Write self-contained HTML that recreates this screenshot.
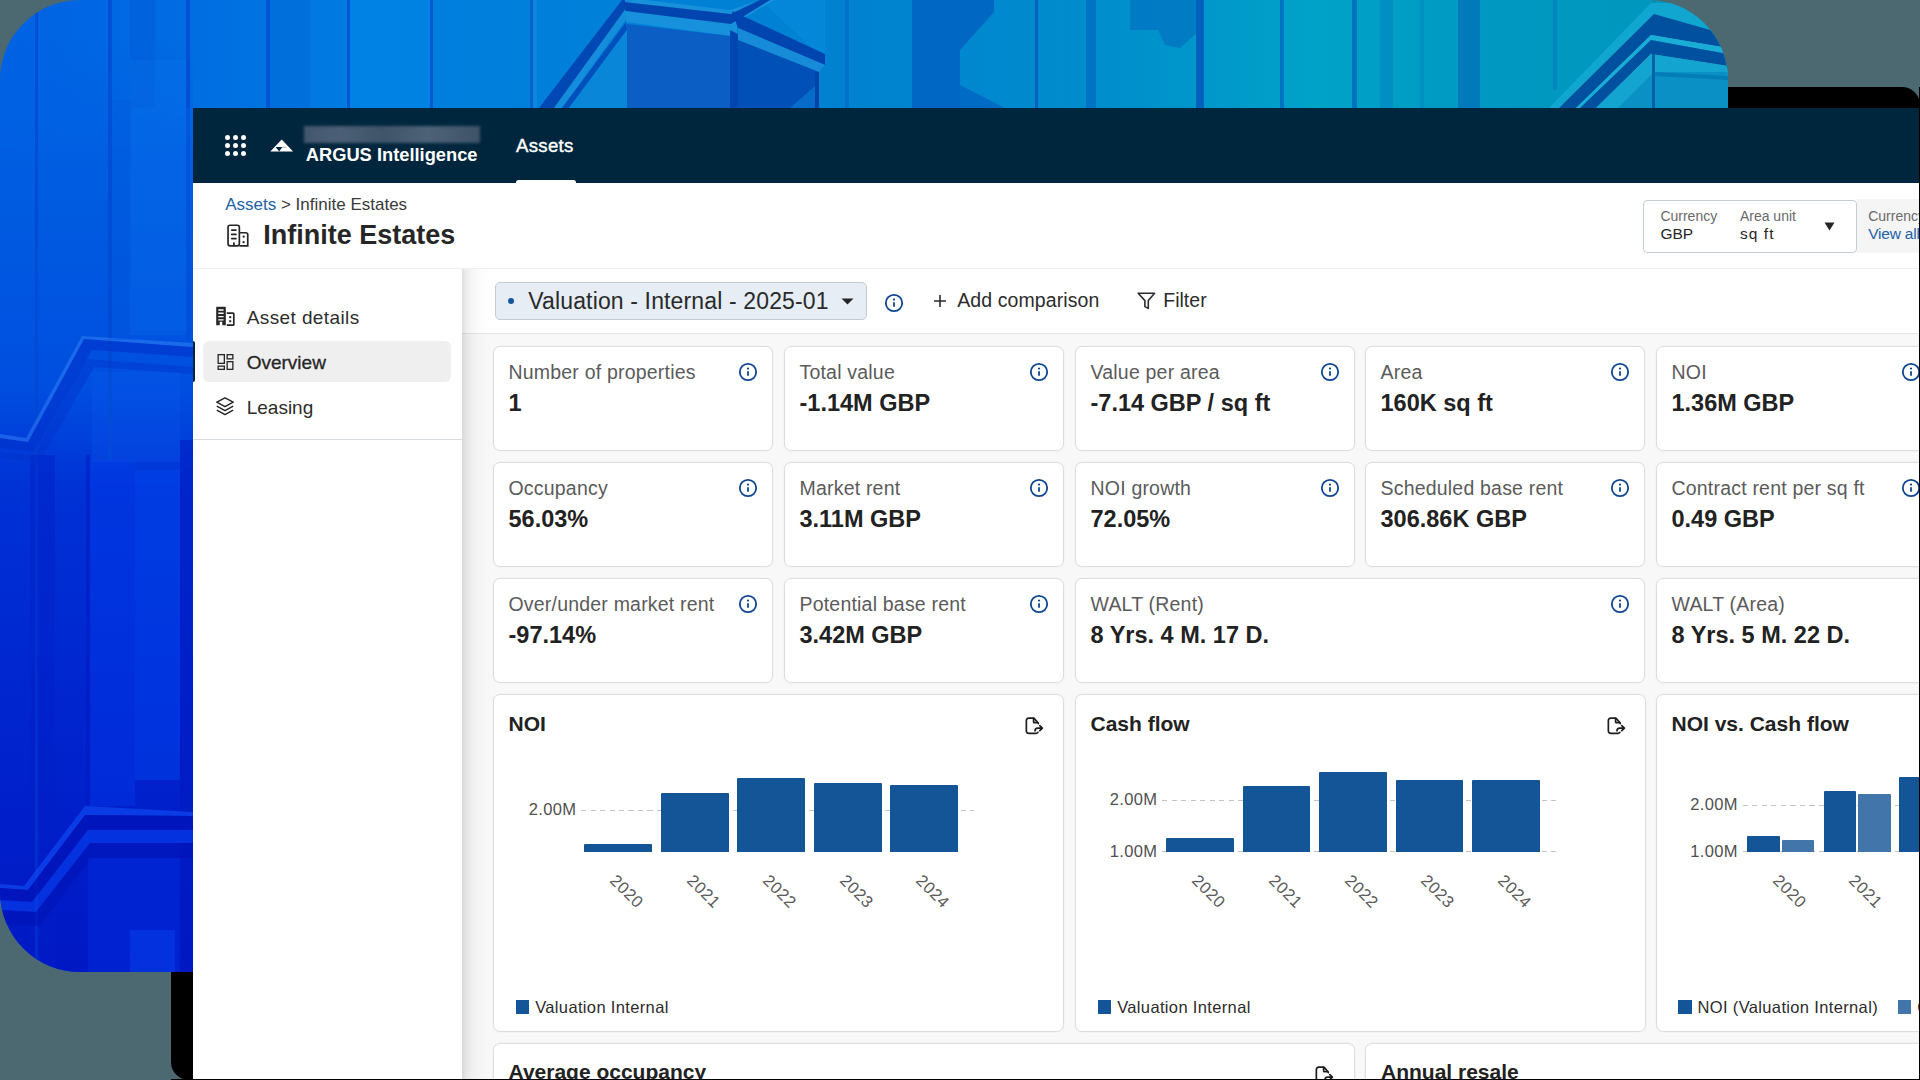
<!DOCTYPE html>
<html><head><meta charset="utf-8">
<style>
*{box-sizing:border-box;margin:0;padding:0}
html,body{width:1920px;height:1080px;overflow:hidden}
body{position:relative;background:#4c6870;font-family:"Liberation Sans",sans-serif;color:#262626}
#frame{position:absolute;left:171px;top:87px;width:1749px;height:993px;background:#000;border-radius:18px}
#photo{position:absolute;left:0;top:0;width:1728px;height:972px;border-radius:80px;overflow:hidden}
#app{position:absolute;left:0;top:0;width:1919px;height:1079px;overflow:hidden;clip-path:inset(108px 0 0 193px)}
.r{position:absolute}
.t{position:absolute;white-space:nowrap;line-height:1}
.ic{position:absolute;overflow:visible}
.card{position:absolute;background:#fff;border:1px solid #dedede;border-radius:7px;box-shadow:0 0 0 0.5px rgba(0,0,0,0.03)}
</style></head>
<body>
<div id="frame"></div>
<div id="photo">
<svg width="1728" height="972" viewBox="0 0 1728 972">
<defs>
<linearGradient id="pg" x1="0" y1="0" x2="1728" y2="0" gradientUnits="userSpaceOnUse">
<stop offset="0" stop-color="#0062e4"/>
<stop offset="0.09" stop-color="#006ae2"/>
<stop offset="0.22" stop-color="#007ee0"/>
<stop offset="0.5" stop-color="#0082d0"/>
<stop offset="0.64" stop-color="#008ecc"/>
<stop offset="0.76" stop-color="#00a2c8"/>
<stop offset="0.87" stop-color="#0098c0"/>
<stop offset="1" stop-color="#0096bc"/>
</linearGradient>
<linearGradient id="lg" x1="0" y1="0" x2="0" y2="972" gradientUnits="userSpaceOnUse">
<stop offset="0" stop-color="#0064e4"/>
<stop offset="0.2" stop-color="#005ce0"/>
<stop offset="0.4" stop-color="#004ee0"/>
<stop offset="0.5" stop-color="#0032d6"/>
<stop offset="0.7" stop-color="#0026d0"/>
<stop offset="1" stop-color="#0018c4"/>
</linearGradient>
<linearGradient id="tf" x1="0" y1="40" x2="0" y2="160" gradientUnits="userSpaceOnUse">
<stop offset="0" stop-color="#fff" stop-opacity="0"/>
<stop offset="1" stop-color="#fff" stop-opacity="1"/>
</linearGradient>
<mask id="lm" maskUnits="userSpaceOnUse" x="0" y="0" width="260" height="972"><rect x="0" y="0" width="260" height="972" fill="url(#tf)"/></mask>
</defs>
<rect width="1728" height="972" fill="url(#pg)"/>
<rect x="0" y="40" width="193" height="932" fill="url(#lg)" mask="url(#lm)"/>
<!-- left-top stripes -->
<g fill="#0048d0" opacity="0.7">
<rect x="35" y="0" width="3" height="972"/>
<rect x="108" y="0" width="4" height="460"/>
<rect x="186" y="0" width="4" height="108"/>
<rect x="266" y="0" width="4" height="108"/>
<rect x="347" y="0" width="3" height="108"/>
<rect x="430" y="0" width="3" height="108"/>
</g>
<rect x="130" y="0" width="25" height="108" fill="#0058d8" opacity="0.4"/>
<rect x="270" y="0" width="40" height="108" fill="#0060d0" opacity="0.35"/>
<rect x="350" y="0" width="80" height="108" fill="#0088e8" opacity="0.45"/>
<!-- balcony box -->
<path d="M760 0 L825 0 L825 60 Z" fill="#0a8ee0" opacity="0.5"/>
<path d="M539 108 L622 0 L632 0 L554 108 Z" fill="#0048b4"/>
<path d="M554 108 L632 0 L640 0 L562 108 Z" fill="#1a90dc" opacity="0.8"/>
<path d="M562 108 L626 22 L627 30 L569 108 Z" fill="#0050bc"/>
<path d="M569 108 L627 30 L627 108 Z" fill="#0a86d8"/>
<path d="M625 0 L645 0 L730 10 L760 0 L775 0 L737 22 L737 36 L730 36 L626 22 Z" fill="#1a92dc" opacity="0.9"/>
<path d="M624 2 L730.6 14 L760 0 L770 0 L731 24 L625.6 11 Z" fill="#0044b0"/>
<path d="M627 24 L730 36 L730 108 L627 108 Z" fill="#0a5ec4"/>
<path d="M730 30 L738 34 L738 108 L730 108 Z" fill="#0046b0"/>
<path d="M732 11 L825 54 L825 65 L738 28 Z" fill="#0044b0"/>
<path d="M738 28 L825 65 L819 72 L738 40 Z" fill="#1a8cd8" opacity="0.9"/>
<path d="M738 40 L819 72 L819 108 L738 108 Z" fill="#0050b8"/>
<rect x="815" y="72" width="4" height="36" fill="#0044a8"/>
<path d="M790 108 L815 86 L815 108 Z" fill="#0a78d0" opacity="0.7"/>
<rect x="530" y="0" width="3" height="108" fill="#0050c8" opacity="0.6"/><rect x="533" y="0" width="4" height="108" fill="#1a90e0" opacity="0.5"/>
<rect x="845" y="0" width="4" height="108" fill="#0060c0" opacity="0.5"/>
<!-- middle shapes -->
<path d="M912 0 L994 0 L994 12 L960 50 L960 108 L912 108 Z" fill="#0060c0" opacity="0.8"/>
<path d="M960 85 L1005 108 L960 108 Z" fill="#0060c0" opacity="0.7"/>
<rect x="1035" y="0" width="3" height="108" fill="#0062c0"/>
<rect x="1086" y="0" width="10" height="108" fill="#0068c0" opacity="0.7"/>
<path d="M1130 0 L1200 0 L1200 30 L1180 48 L1165 45 L1158 30 L1130 30 Z" fill="#0070c0" opacity="0.7"/>
<rect x="1196" y="0" width="8" height="108" fill="#0060bc"/>
<rect x="1280" y="0" width="4" height="108" fill="#0068c0" opacity="0.8"/>
<rect x="1352" y="0" width="5" height="108" fill="#0068bc" opacity="0.8"/>
<rect x="1380" y="0" width="13" height="108" fill="#0080c0" opacity="0.5"/>
<rect x="1420" y="0" width="4" height="108" fill="#0086c0" opacity="0.5"/>
<rect x="1458" y="0" width="22" height="108" fill="#006cb8" opacity="0.7"/>
<rect x="1553" y="0" width="4" height="90" fill="#007cc0" opacity="0.6"/>
<!-- right beams -->
<path d="M1549 108 L1651 3 L1728 3 L1728 108 Z" fill="#10a6d0"/>
<path d="M1559 108 L1654 14 L1728 35 L1728 48 L1651 35 L1576 108 Z" fill="#0050a0"/>
<path d="M1576 108 L1651 35 L1728 48 L1728 54 L1651 40 L1580 108 Z" fill="#1aaed6"/>
<path d="M1580 108 L1651 40 L1728 54 L1728 66 L1651 54 L1596 108 Z" fill="#0050a0"/>
<path d="M1596 108 L1651 54 L1728 66 L1728 72 L1654 72 L1618 108 Z" fill="#14a4d0"/>
<path d="M1618 108 L1654 72 L1728 72 L1728 108 Z" fill="#0a90c4"/>
<rect x="1652" y="54" width="3" height="54" fill="#0060a8"/>
<path d="M1654 72 L1728 76 L1728 80 L1654 76 Z" fill="#0070b0" opacity="0.6"/>
<!-- left strip structure -->
<rect x="30" y="455" width="25" height="517" fill="#0020c8" opacity="0.45"/>
<rect x="90" y="460" width="45" height="346" fill="#0040f0" opacity="0.35"/>
<rect x="135" y="470" width="45" height="310" fill="#0050f8" opacity="0.35"/>
<rect x="180" y="440" width="13" height="532" fill="#0018c0" opacity="0.5"/>
<rect x="86" y="455" width="4" height="350" fill="#0018c0" opacity="0.5"/>
<g>
<path d="M84 339 L193 347 L193 357 L92 350 L34 452 L0 448 L0 438 L28 442 Z" fill="#0030c8" opacity="0.55"/>
<path d="M86 359 L193 367 L193 374 L94 367 L40 462 L0 458 L0 452 L34 455 Z" fill="#0030c8" opacity="0.4"/>
<path d="M85 806 L193 812 L193 816 L85 815 L28 890 L0 888 L0 884 L24 886 Z" fill="#1050f8" opacity="0.6"/>
<path d="M85 815 L193 816 L193 830 L88 830 L32 902 L0 900 L0 888 L28 890 Z" fill="#0014b8" opacity="0.75"/>
<path d="M88 830 L193 830 L193 843 L90 843 L36 912 L0 910 L0 900 L32 902 Z" fill="#0a44f0" opacity="0.55"/>
<path d="M90 843 L193 843 L193 858 L92 858 L40 926 L0 924 L0 910 L36 912 Z" fill="#0014b8" opacity="0.6"/>
</g>
<rect x="88" y="858" width="92" height="114" fill="#0030e0" opacity="0.4"/>
<rect x="130" y="930" width="45" height="42" fill="#0848f0" opacity="0.4"/>
<rect x="130" y="60" width="58" height="275" fill="#0a78f0" opacity="0.25"/>
<rect x="186" y="60" width="4" height="280" fill="#0048d0" opacity="0.5"/>
<path d="M82 336 L193 343 L193 347 L84 339 L28 442 L0 438 L0 434 L26 438 Z" fill="#3a8af8" opacity="0.45"/>
<rect x="92" y="372" width="88" height="90" fill="#0a5af0" opacity="0.25"/>
<rect x="113" y="100" width="18" height="240" fill="#0058dc" opacity="0.3"/>
</svg>
</div>
<div id="app">
<div class="r" style="left:193px;top:108px;width:1726px;height:75px;background:#00263d"></div>
<div class="r" style="left:193px;top:183px;width:1726px;height:896px;background:#fff"></div>
<div class="r" style="left:224.8px;top:135.4px;width:5px;height:5px;border-radius:50%;background:#fff"></div>
<div class="r" style="left:232.9px;top:135.4px;width:5px;height:5px;border-radius:50%;background:#fff"></div>
<div class="r" style="left:241.0px;top:135.4px;width:5px;height:5px;border-radius:50%;background:#fff"></div>
<div class="r" style="left:224.8px;top:143.3px;width:5px;height:5px;border-radius:50%;background:#fff"></div>
<div class="r" style="left:232.9px;top:143.3px;width:5px;height:5px;border-radius:50%;background:#fff"></div>
<div class="r" style="left:241.0px;top:143.3px;width:5px;height:5px;border-radius:50%;background:#fff"></div>
<div class="r" style="left:224.8px;top:151.2px;width:5px;height:5px;border-radius:50%;background:#fff"></div>
<div class="r" style="left:232.9px;top:151.2px;width:5px;height:5px;border-radius:50%;background:#fff"></div>
<div class="r" style="left:241.0px;top:151.2px;width:5px;height:5px;border-radius:50%;background:#fff"></div>
<svg class="ic" width="24" height="14" viewBox="0 0 24 14" style="left:269.5px;top:139px"><path d="M11.7 0.5L0.3 12.6H23.1Z" fill="#fff"/><path d="M5.6 8.1H12.3L9.2 12.6Z" fill="#00263d"/><path d="M12.2 8.3H16.5" stroke="#00263d" stroke-width="0.7" opacity="0.5"/></svg>
<div class="r" style="left:304px;top:126px;width:176px;height:17px;background:linear-gradient(90deg,#4a5d74,#53667c 20%,#47596e 45%,#56697e 70%,#45586d);filter:blur(1.5px);opacity:.9"></div>
<div class="t" style="left:305.8px;top:146.41px;font-size:18.3px;color:#fff;font-weight:bold;">ARGUS Intelligence</div>
<div class="t" style="left:516.0px;top:136.86px;font-size:18.6px;color:#fff;-webkit-text-stroke:0.4px #fff;letter-spacing:0.3px;">Assets</div>
<div class="r" style="left:516px;top:179.6px;width:59.5px;height:3.4px;background:#fff;border-radius:2.5px 2.5px 0 0"></div>
<div class="t" style="left:225.2px;top:195.81px;font-size:17px;color:#3a3a3a;"><span style="color:#2262a8">Assets</span> &gt; Infinite Estates</div>
<svg class="ic" width="24" height="24" viewBox="0 0 24 24" style="left:226px;top:224px"><g fill="none" stroke="#262626" stroke-width="1.7"><rect x="2.05" y="1.25" width="11.3" height="20.6" rx="2"/><path d="M13.35 8.75H19.75a2 2 0 0 1 2 2V21.85H13.35"/></g><g stroke="#262626" stroke-width="1.8" stroke-linecap="round"><path d="M5.8 6.1H9.9M5.8 10.4H9.9M5.8 14.6H9.9M7.9 19.2V21.5"/></g><circle cx="17.6" cy="12.7" r="1.15" fill="#262626"/><circle cx="17.6" cy="18.2" r="1.15" fill="#262626"/></svg>
<div class="t" style="left:263.2px;top:222.34px;font-size:27px;color:#262626;font-weight:bold;">Infinite Estates</div>
<div class="r" style="left:1643px;top:199.5px;width:214px;height:53px;border:1px solid #c6cdd2;border-radius:4px;background:#fff"></div>
<div class="r" style="left:1857px;top:199px;width:62px;height:54px;background:#f5f5f5"></div>
<div class="t" style="left:1660.4px;top:209.15px;font-size:14px;color:#6a6a6a;">Currency</div>
<div class="t" style="left:1660.4px;top:225.58px;font-size:15.5px;color:#262626;">GBP</div>
<div class="t" style="left:1739.9px;top:209.15px;font-size:14px;color:#6a6a6a;">Area unit</div>
<div class="t" style="left:1739.9px;top:225.58px;font-size:15.5px;color:#262626;letter-spacing:1.1px;">sq ft</div>
<svg class="ic" width="11" height="9" viewBox="0 0 11 9" style="left:1824px;top:221.5px"><path d="M0.5 0.5h10L5.5 8.5z" fill="#262626"/></svg>
<div class="t" style="left:1868.2px;top:209.45px;font-size:14px;color:#6a6a6a;">Currency</div>
<div class="t" style="left:1868.2px;top:225.58px;font-size:15.5px;color:#2262a8;letter-spacing:-0.2px;">View all</div>
<div class="r" style="left:193px;top:268px;width:1726px;height:1px;background:#eef0f1"></div>
<div class="r" style="left:203px;top:341.3px;width:248px;height:40.7px;border-radius:6px;background:#efefef"></div>
<div class="r" style="left:193px;top:341px;width:2px;height:41px;border-radius:0 2px 2px 0;background:#00263d"></div>
<div class="r" style="left:193px;top:439px;width:269px;height:1px;background:#d8dde1"></div>
<svg class="ic" width="20" height="20" viewBox="0 0 20 20" style="left:214.5px;top:306px"><path d="M1.2 19.2V1.8c0-.6.4-1 1-1h7.6c.6 0 1 .4 1 1v17.4h-3.5v-3.5H4.7v3.5z" fill="#262626"/><path d="M3.3 4h5.3M3.3 7.3h5.3M3.3 10.6h5.3M3.3 13.9h5.3" stroke="#fff" stroke-width="1.4"/><path d="M11.8 7.2h6.2c.5 0 .8.3.8.8v10.4c0 .5-.3.8-.8.8h-6.2" fill="none" stroke="#262626" stroke-width="1.7"/><rect x="14.2" y="10.2" width="2" height="2" fill="#262626"/><rect x="14.2" y="14.2" width="2" height="2" fill="#262626"/></svg>
<svg class="ic" width="20" height="20" viewBox="0 0 20 20" style="left:214.5px;top:352px"><g fill="none" stroke="#262626" stroke-width="1.3"><rect x="3.15" y="2.65" width="6.2" height="8.7"/><rect x="3.15" y="14.15" width="6.2" height="3.2"/><rect x="12.15" y="2.65" width="5.7" height="4.2"/><rect x="12.15" y="9.65" width="5.7" height="7.7"/></g></svg>
<svg class="ic" width="20" height="20" viewBox="0 0 20 20" style="left:214.5px;top:396px"><g fill="none" stroke="#262626" stroke-width="1.5" stroke-linejoin="round"><path d="M10 1.8L18.2 6.2 10 10.6 1.8 6.2z"/><path d="M1.8 10.2L10 14.6l8.2-4.4"/><path d="M1.8 14.2L10 18.6l8.2-4.4"/></g></svg>
<div class="t" style="left:246.7px;top:308.12px;font-size:19px;color:#2c2c2c;letter-spacing:0.4px;">Asset details</div>
<div class="t" style="left:246.7px;top:352.82px;font-size:19px;color:#262626;-webkit-text-stroke:0.3px #262626;">Overview</div>
<div class="t" style="left:246.7px;top:397.62px;font-size:19px;color:#2c2c2c;">Leasing</div>
<div class="r" style="left:462px;top:269px;width:1457px;height:810px;background:#f8f8f8"></div>
<div class="r" style="left:462px;top:269px;width:1457px;height:65px;background:#fff;border-bottom:1px solid #e2e6e9"></div>
<div class="r" style="left:462px;top:269px;width:30px;height:810px;background:linear-gradient(90deg,rgba(0,0,0,.13) 0px,rgba(0,0,0,.075) 4px,rgba(0,0,0,.035) 10px,rgba(0,0,0,.012) 18px,rgba(0,0,0,0) 30px)"></div>
<div class="r" style="left:494.5px;top:281.5px;width:372px;height:38px;border:1px solid #c3ccd5;border-radius:5px;background:#e6edf4"></div>
<div class="r" style="left:508px;top:297.8px;width:6px;height:6px;border-radius:50%;background:#1555a0"></div>
<div class="t" style="left:528.3px;top:289.73px;font-size:23px;color:#2a2a2a;letter-spacing:0.14px;">Valuation - Internal - 2025-01</div>
<svg class="ic" width="13" height="7" viewBox="0 0 13 7" style="left:840.5px;top:297.5px"><path d="M0.5 0.5h12L6.5 6.5z" fill="#262626"/></svg>
<svg class="ic" width="20" height="20" viewBox="0 0 20 20" style="left:884.0px;top:293.0px"><circle cx="10" cy="10" r="8.2" fill="none" stroke="#0d4592" stroke-width="1.8"/><circle cx="10" cy="6.6" r="1.1" fill="#0d4592"/><rect x="9.1" y="9" width="1.8" height="5" rx="0.9" fill="#0d4592"/></svg>
<svg class="ic" width="14" height="14" viewBox="0 0 14 14" style="left:933px;top:294px"><path d="M7 1v12M1 7h12" stroke="#2c2c2c" stroke-width="1.6"/></svg>
<div class="t" style="left:957.2px;top:291.49px;font-size:19.5px;color:#2c2c2c;letter-spacing:0.1px;">Add comparison</div>
<svg class="ic" width="19" height="18" viewBox="0 0 19 18" style="left:1137px;top:291.5px"><path d="M1.2 1.2h16.4l-6.3 7.4v7.8l-3.4-1.8V8.6z" fill="none" stroke="#2c2c2c" stroke-width="1.6" stroke-linejoin="round"/></svg>
<div class="t" style="left:1163.3px;top:291.49px;font-size:19.5px;color:#2c2c2c;">Filter</div>
<div class="card" style="left:493px;top:346px;width:280px;height:105px"></div>
<div class="t" style="left:508.5px;top:362.59px;font-size:19.5px;color:#5b5b5b;letter-spacing:0.2px;">Number of properties</div>
<div class="t" style="left:508.5px;top:392.01px;font-size:23.5px;color:#222;font-weight:bold;">1</div>
<svg class="ic" width="20" height="20" viewBox="0 0 20 20" style="left:738.0px;top:361.8px"><circle cx="10" cy="10" r="8.2" fill="none" stroke="#0d4592" stroke-width="1.8"/><circle cx="10" cy="6.6" r="1.1" fill="#0d4592"/><rect x="9.1" y="9" width="1.8" height="5" rx="0.9" fill="#0d4592"/></svg>
<div class="card" style="left:784px;top:346px;width:280px;height:105px"></div>
<div class="t" style="left:799.5px;top:362.59px;font-size:19.5px;color:#5b5b5b;letter-spacing:0.2px;">Total value</div>
<div class="t" style="left:799.5px;top:392.01px;font-size:23.5px;color:#222;font-weight:bold;">-1.14M GBP</div>
<svg class="ic" width="20" height="20" viewBox="0 0 20 20" style="left:1029.0px;top:361.8px"><circle cx="10" cy="10" r="8.2" fill="none" stroke="#0d4592" stroke-width="1.8"/><circle cx="10" cy="6.6" r="1.1" fill="#0d4592"/><rect x="9.1" y="9" width="1.8" height="5" rx="0.9" fill="#0d4592"/></svg>
<div class="card" style="left:1075px;top:346px;width:280px;height:105px"></div>
<div class="t" style="left:1090.5px;top:362.59px;font-size:19.5px;color:#5b5b5b;letter-spacing:0.2px;">Value per area</div>
<div class="t" style="left:1090.5px;top:392.01px;font-size:23.5px;color:#222;font-weight:bold;">-7.14 GBP / sq ft</div>
<svg class="ic" width="20" height="20" viewBox="0 0 20 20" style="left:1320.0px;top:361.8px"><circle cx="10" cy="10" r="8.2" fill="none" stroke="#0d4592" stroke-width="1.8"/><circle cx="10" cy="6.6" r="1.1" fill="#0d4592"/><rect x="9.1" y="9" width="1.8" height="5" rx="0.9" fill="#0d4592"/></svg>
<div class="card" style="left:1365px;top:346px;width:280px;height:105px"></div>
<div class="t" style="left:1380.5px;top:362.59px;font-size:19.5px;color:#5b5b5b;letter-spacing:0.2px;">Area</div>
<div class="t" style="left:1380.5px;top:392.01px;font-size:23.5px;color:#222;font-weight:bold;">160K sq ft</div>
<svg class="ic" width="20" height="20" viewBox="0 0 20 20" style="left:1610.0px;top:361.8px"><circle cx="10" cy="10" r="8.2" fill="none" stroke="#0d4592" stroke-width="1.8"/><circle cx="10" cy="6.6" r="1.1" fill="#0d4592"/><rect x="9.1" y="9" width="1.8" height="5" rx="0.9" fill="#0d4592"/></svg>
<div class="card" style="left:1656px;top:346px;width:280px;height:105px"></div>
<div class="t" style="left:1671.5px;top:362.59px;font-size:19.5px;color:#5b5b5b;letter-spacing:0.2px;">NOI</div>
<div class="t" style="left:1671.5px;top:392.01px;font-size:23.5px;color:#222;font-weight:bold;">1.36M GBP</div>
<svg class="ic" width="20" height="20" viewBox="0 0 20 20" style="left:1901.0px;top:361.8px"><circle cx="10" cy="10" r="8.2" fill="none" stroke="#0d4592" stroke-width="1.8"/><circle cx="10" cy="6.6" r="1.1" fill="#0d4592"/><rect x="9.1" y="9" width="1.8" height="5" rx="0.9" fill="#0d4592"/></svg>
<div class="card" style="left:493px;top:462px;width:280px;height:105px"></div>
<div class="t" style="left:508.5px;top:478.59px;font-size:19.5px;color:#5b5b5b;letter-spacing:0.2px;">Occupancy</div>
<div class="t" style="left:508.5px;top:508.01px;font-size:23.5px;color:#222;font-weight:bold;">56.03%</div>
<svg class="ic" width="20" height="20" viewBox="0 0 20 20" style="left:738.0px;top:477.8px"><circle cx="10" cy="10" r="8.2" fill="none" stroke="#0d4592" stroke-width="1.8"/><circle cx="10" cy="6.6" r="1.1" fill="#0d4592"/><rect x="9.1" y="9" width="1.8" height="5" rx="0.9" fill="#0d4592"/></svg>
<div class="card" style="left:784px;top:462px;width:280px;height:105px"></div>
<div class="t" style="left:799.5px;top:478.59px;font-size:19.5px;color:#5b5b5b;letter-spacing:0.2px;">Market rent</div>
<div class="t" style="left:799.5px;top:508.01px;font-size:23.5px;color:#222;font-weight:bold;">3.11M GBP</div>
<svg class="ic" width="20" height="20" viewBox="0 0 20 20" style="left:1029.0px;top:477.8px"><circle cx="10" cy="10" r="8.2" fill="none" stroke="#0d4592" stroke-width="1.8"/><circle cx="10" cy="6.6" r="1.1" fill="#0d4592"/><rect x="9.1" y="9" width="1.8" height="5" rx="0.9" fill="#0d4592"/></svg>
<div class="card" style="left:1075px;top:462px;width:280px;height:105px"></div>
<div class="t" style="left:1090.5px;top:478.59px;font-size:19.5px;color:#5b5b5b;letter-spacing:0.2px;">NOI growth</div>
<div class="t" style="left:1090.5px;top:508.01px;font-size:23.5px;color:#222;font-weight:bold;">72.05%</div>
<svg class="ic" width="20" height="20" viewBox="0 0 20 20" style="left:1320.0px;top:477.8px"><circle cx="10" cy="10" r="8.2" fill="none" stroke="#0d4592" stroke-width="1.8"/><circle cx="10" cy="6.6" r="1.1" fill="#0d4592"/><rect x="9.1" y="9" width="1.8" height="5" rx="0.9" fill="#0d4592"/></svg>
<div class="card" style="left:1365px;top:462px;width:280px;height:105px"></div>
<div class="t" style="left:1380.5px;top:478.59px;font-size:19.5px;color:#5b5b5b;letter-spacing:0.2px;">Scheduled base rent</div>
<div class="t" style="left:1380.5px;top:508.01px;font-size:23.5px;color:#222;font-weight:bold;">306.86K GBP</div>
<svg class="ic" width="20" height="20" viewBox="0 0 20 20" style="left:1610.0px;top:477.8px"><circle cx="10" cy="10" r="8.2" fill="none" stroke="#0d4592" stroke-width="1.8"/><circle cx="10" cy="6.6" r="1.1" fill="#0d4592"/><rect x="9.1" y="9" width="1.8" height="5" rx="0.9" fill="#0d4592"/></svg>
<div class="card" style="left:1656px;top:462px;width:280px;height:105px"></div>
<div class="t" style="left:1671.5px;top:478.59px;font-size:19.5px;color:#5b5b5b;letter-spacing:0.2px;">Contract rent per sq ft</div>
<div class="t" style="left:1671.5px;top:508.01px;font-size:23.5px;color:#222;font-weight:bold;">0.49 GBP</div>
<svg class="ic" width="20" height="20" viewBox="0 0 20 20" style="left:1901.0px;top:477.8px"><circle cx="10" cy="10" r="8.2" fill="none" stroke="#0d4592" stroke-width="1.8"/><circle cx="10" cy="6.6" r="1.1" fill="#0d4592"/><rect x="9.1" y="9" width="1.8" height="5" rx="0.9" fill="#0d4592"/></svg>
<div class="card" style="left:493px;top:578px;width:280px;height:105px"></div>
<div class="t" style="left:508.5px;top:594.59px;font-size:19.5px;color:#5b5b5b;letter-spacing:0.2px;">Over/under market rent</div>
<div class="t" style="left:508.5px;top:624.01px;font-size:23.5px;color:#222;font-weight:bold;">-97.14%</div>
<svg class="ic" width="20" height="20" viewBox="0 0 20 20" style="left:738.0px;top:593.8px"><circle cx="10" cy="10" r="8.2" fill="none" stroke="#0d4592" stroke-width="1.8"/><circle cx="10" cy="6.6" r="1.1" fill="#0d4592"/><rect x="9.1" y="9" width="1.8" height="5" rx="0.9" fill="#0d4592"/></svg>
<div class="card" style="left:784px;top:578px;width:280px;height:105px"></div>
<div class="t" style="left:799.5px;top:594.59px;font-size:19.5px;color:#5b5b5b;letter-spacing:0.2px;">Potential base rent</div>
<div class="t" style="left:799.5px;top:624.01px;font-size:23.5px;color:#222;font-weight:bold;">3.42M GBP</div>
<svg class="ic" width="20" height="20" viewBox="0 0 20 20" style="left:1029.0px;top:593.8px"><circle cx="10" cy="10" r="8.2" fill="none" stroke="#0d4592" stroke-width="1.8"/><circle cx="10" cy="6.6" r="1.1" fill="#0d4592"/><rect x="9.1" y="9" width="1.8" height="5" rx="0.9" fill="#0d4592"/></svg>
<div class="card" style="left:1075px;top:578px;width:570px;height:105px"></div>
<div class="t" style="left:1090.5px;top:594.59px;font-size:19.5px;color:#5b5b5b;letter-spacing:0.2px;">WALT (Rent)</div>
<div class="t" style="left:1090.5px;top:624.01px;font-size:23.5px;color:#222;font-weight:bold;">8 Yrs. 4 M. 17 D.</div>
<svg class="ic" width="20" height="20" viewBox="0 0 20 20" style="left:1610.0px;top:593.8px"><circle cx="10" cy="10" r="8.2" fill="none" stroke="#0d4592" stroke-width="1.8"/><circle cx="10" cy="6.6" r="1.1" fill="#0d4592"/><rect x="9.1" y="9" width="1.8" height="5" rx="0.9" fill="#0d4592"/></svg>
<div class="card" style="left:1656px;top:578px;width:280px;height:105px"></div>
<div class="t" style="left:1671.5px;top:594.59px;font-size:19.5px;color:#5b5b5b;letter-spacing:0.2px;">WALT (Area)</div>
<div class="t" style="left:1671.5px;top:624.01px;font-size:23.5px;color:#222;font-weight:bold;">8 Yrs. 5 M. 22 D.</div>
<div class="r" style="left:1919px;top:0;width:1px;height:1080px"></div>
<div class="card" style="left:493px;top:694px;width:571px;height:338px"></div>
<div class="t" style="left:508.5px;top:713.02px;font-size:21px;color:#222;font-weight:bold;">NOI</div>
<svg class="ic" width="20" height="20" viewBox="0 0 20 20" style="left:1023.5px;top:714.5px"><g fill="none" stroke="#1e1e1e" stroke-width="1.7" stroke-linecap="round" stroke-linejoin="round"><path d="M13.9 17.3c-.4.7-1.1 1.05-1.9 1.05H4.7c-1.3 0-2.35-1-2.35-2.35V5.4c0-1.3 1-2.35 2.35-2.35H9.3c.35 0 .6.1.85.35l3.8 4.4c.2.25.35.5.35.8"/><path d="M9.6 3.3V7c0 .4.3.7.7.7H13.8"/><path d="M11 15.8c0-1.6 1-2.7 2.6-2.7H18.2M15.8 10.6L18.4 13.1L15.8 15.7"/></g></svg>
<div class="card" style="left:1075px;top:694px;width:571px;height:338px"></div>
<div class="t" style="left:1090.5px;top:713.02px;font-size:21px;color:#222;font-weight:bold;">Cash flow</div>
<svg class="ic" width="20" height="20" viewBox="0 0 20 20" style="left:1605.5px;top:714.5px"><g fill="none" stroke="#1e1e1e" stroke-width="1.7" stroke-linecap="round" stroke-linejoin="round"><path d="M13.9 17.3c-.4.7-1.1 1.05-1.9 1.05H4.7c-1.3 0-2.35-1-2.35-2.35V5.4c0-1.3 1-2.35 2.35-2.35H9.3c.35 0 .6.1.85.35l3.8 4.4c.2.25.35.5.35.8"/><path d="M9.6 3.3V7c0 .4.3.7.7.7H13.8"/><path d="M11 15.8c0-1.6 1-2.7 2.6-2.7H18.2M15.8 10.6L18.4 13.1L15.8 15.7"/></g></svg>
<div class="card" style="left:1656px;top:694px;width:571px;height:338px"></div>
<div class="t" style="left:1671.5px;top:713.02px;font-size:21px;color:#222;font-weight:bold;">NOI vs. Cash flow</div>
<div class="r" style="left:580.5px;top:809.8px;width:393.5px;height:1px;background:repeating-linear-gradient(90deg,#c4c4c4 0 5px,transparent 5px 9.5px)"></div>
<div class="t" style="left:506.5px;width:70px;text-align:right;top:801.43px;font-size:16.5px;letter-spacing:0.4px;color:#505050">2.00M</div>
<div class="r" style="left:584.4px;top:844px;width:67.60000000000002px;height:8px;background:#135596;border-radius:1px 1px 0 0"></div>
<div class="r" style="left:660.5px;top:792.8px;width:68.10000000000002px;height:59.200000000000045px;background:#135596;border-radius:1px 1px 0 0"></div>
<div class="r" style="left:737.4px;top:777.5px;width:67.80000000000007px;height:74.5px;background:#135596;border-radius:1px 1px 0 0"></div>
<div class="r" style="left:813.8px;top:783.4px;width:67.80000000000007px;height:68.60000000000002px;background:#135596;border-radius:1px 1px 0 0"></div>
<div class="r" style="left:890px;top:785px;width:68px;height:67px;background:#135596;border-radius:1px 1px 0 0"></div>
<div class="t" style="left:603px;top:883px;width:48px;text-align:center;font-size:16.5px;letter-spacing:0.6px;color:#5a5a5a;transform:rotate(45deg);transform-origin:50% 50%">2020</div>
<div class="t" style="left:679.5px;top:883px;width:48px;text-align:center;font-size:16.5px;letter-spacing:0.6px;color:#5a5a5a;transform:rotate(45deg);transform-origin:50% 50%">2021</div>
<div class="t" style="left:756px;top:883px;width:48px;text-align:center;font-size:16.5px;letter-spacing:0.6px;color:#5a5a5a;transform:rotate(45deg);transform-origin:50% 50%">2022</div>
<div class="t" style="left:833px;top:883px;width:48px;text-align:center;font-size:16.5px;letter-spacing:0.6px;color:#5a5a5a;transform:rotate(45deg);transform-origin:50% 50%">2023</div>
<div class="t" style="left:909px;top:883px;width:48px;text-align:center;font-size:16.5px;letter-spacing:0.6px;color:#5a5a5a;transform:rotate(45deg);transform-origin:50% 50%">2024</div>
<div class="r" style="left:515.7px;top:1000.0px;width:13.5px;height:13.5px;background:#135596"></div>
<div class="t" style="left:535.2px;top:998.53px;font-size:16.5px;color:#2c2c2c;letter-spacing:0.35px;">Valuation Internal</div>
<div class="r" style="left:1162.4px;top:799.5px;width:393.1999999999998px;height:1px;background:repeating-linear-gradient(90deg,#c4c4c4 0 5px,transparent 5px 9.5px)"></div>
<div class="r" style="left:1162.4px;top:851.2px;width:393.1999999999998px;height:1px;background:repeating-linear-gradient(90deg,#c4c4c4 0 5px,transparent 5px 9.5px)"></div>
<div class="t" style="left:1087.5px;width:70px;text-align:right;top:791.13px;font-size:16.5px;letter-spacing:0.4px;color:#505050">2.00M</div>
<div class="t" style="left:1087.5px;width:70px;text-align:right;top:842.83px;font-size:16.5px;letter-spacing:0.4px;color:#505050">1.00M</div>
<div class="r" style="left:1166.3px;top:838px;width:67.70000000000005px;height:14px;background:#135596;border-radius:1px 1px 0 0"></div>
<div class="r" style="left:1242.6px;top:786.3px;width:67.90000000000009px;height:65.70000000000005px;background:#135596;border-radius:1px 1px 0 0"></div>
<div class="r" style="left:1319px;top:772px;width:68px;height:80px;background:#135596;border-radius:1px 1px 0 0"></div>
<div class="r" style="left:1395.5px;top:779.8px;width:67.5px;height:72.20000000000005px;background:#135596;border-radius:1px 1px 0 0"></div>
<div class="r" style="left:1472px;top:779.5px;width:68px;height:72.5px;background:#135596;border-radius:1px 1px 0 0"></div>
<div class="t" style="left:1185px;top:883px;width:48px;text-align:center;font-size:16.5px;letter-spacing:0.6px;color:#5a5a5a;transform:rotate(45deg);transform-origin:50% 50%">2020</div>
<div class="t" style="left:1261.5px;top:883px;width:48px;text-align:center;font-size:16.5px;letter-spacing:0.6px;color:#5a5a5a;transform:rotate(45deg);transform-origin:50% 50%">2021</div>
<div class="t" style="left:1338px;top:883px;width:48px;text-align:center;font-size:16.5px;letter-spacing:0.6px;color:#5a5a5a;transform:rotate(45deg);transform-origin:50% 50%">2022</div>
<div class="t" style="left:1414px;top:883px;width:48px;text-align:center;font-size:16.5px;letter-spacing:0.6px;color:#5a5a5a;transform:rotate(45deg);transform-origin:50% 50%">2023</div>
<div class="t" style="left:1491px;top:883px;width:48px;text-align:center;font-size:16.5px;letter-spacing:0.6px;color:#5a5a5a;transform:rotate(45deg);transform-origin:50% 50%">2024</div>
<div class="r" style="left:1097.7px;top:1000.0px;width:13.5px;height:13.5px;background:#135596"></div>
<div class="t" style="left:1117.2px;top:998.53px;font-size:16.5px;color:#2c2c2c;letter-spacing:0.35px;">Valuation Internal</div>
<div class="r" style="left:1743px;top:804.5px;width:176px;height:1px;background:repeating-linear-gradient(90deg,#c4c4c4 0 5px,transparent 5px 9.5px)"></div>
<div class="r" style="left:1743px;top:851.2px;width:176px;height:1px;background:repeating-linear-gradient(90deg,#c4c4c4 0 5px,transparent 5px 9.5px)"></div>
<div class="t" style="left:1668px;width:70px;text-align:right;top:796.13px;font-size:16.5px;letter-spacing:0.4px;color:#505050">2.00M</div>
<div class="t" style="left:1668px;width:70px;text-align:right;top:842.83px;font-size:16.5px;letter-spacing:0.4px;color:#505050">1.00M</div>
<div class="r" style="left:1747px;top:835.9px;width:32.700000000000045px;height:16.100000000000023px;background:#135596;border-radius:1px 1px 0 0"></div>
<div class="r" style="left:1782px;top:839.8px;width:32.40000000000009px;height:12.200000000000045px;background:#4275aa;border-radius:1px 1px 0 0"></div>
<div class="r" style="left:1823.5px;top:790.5px;width:32.5px;height:61.5px;background:#135596;border-radius:1px 1px 0 0"></div>
<div class="r" style="left:1858px;top:793.7px;width:33px;height:58.299999999999955px;background:#4275aa;border-radius:1px 1px 0 0"></div>
<div class="r" style="left:1899px;top:777px;width:33px;height:75px;background:#135596;border-radius:1px 1px 0 0"></div>
<div class="t" style="left:1766px;top:883px;width:48px;text-align:center;font-size:16.5px;letter-spacing:0.6px;color:#5a5a5a;transform:rotate(45deg);transform-origin:50% 50%">2020</div>
<div class="t" style="left:1842px;top:883px;width:48px;text-align:center;font-size:16.5px;letter-spacing:0.6px;color:#5a5a5a;transform:rotate(45deg);transform-origin:50% 50%">2021</div>
<div class="r" style="left:1678px;top:1000.0px;width:13.5px;height:13.5px;background:#135596"></div>
<div class="t" style="left:1697.5px;top:998.53px;font-size:16.5px;color:#2c2c2c;letter-spacing:0.35px;">NOI (Valuation Internal)</div>
<div class="r" style="left:1897.7px;top:1000.0px;width:13.5px;height:13.5px;background:#4275aa"></div>
<div class="t" style="left:1917.2px;top:998.53px;font-size:16.5px;color:#2c2c2c;letter-spacing:0.35px;">Cash flow</div>
<div class="card" style="left:493px;top:1043px;width:862px;height:200px"></div>
<div class="t" style="left:508.5px;top:1060.82px;font-size:21px;color:#222;font-weight:bold;">Average occupancy</div>
<svg class="ic" width="20" height="20" viewBox="0 0 20 20" style="left:1313.5px;top:1063.5px"><g fill="none" stroke="#1e1e1e" stroke-width="1.7" stroke-linecap="round" stroke-linejoin="round"><path d="M13.9 17.3c-.4.7-1.1 1.05-1.9 1.05H4.7c-1.3 0-2.35-1-2.35-2.35V5.4c0-1.3 1-2.35 2.35-2.35H9.3c.35 0 .6.1.85.35l3.8 4.4c.2.25.35.5.35.8"/><path d="M9.6 3.3V7c0 .4.3.7.7.7H13.8"/><path d="M11 15.8c0-1.6 1-2.7 2.6-2.7H18.2M15.8 10.6L18.4 13.1L15.8 15.7"/></g></svg>
<div class="card" style="left:1365px;top:1043px;width:600px;height:200px"></div>
<div class="t" style="left:1381.0px;top:1060.82px;font-size:21px;color:#222;font-weight:bold;">Annual resale</div>
</div>
<div class="r" style="left:1919px;top:87px;width:1px;height:993px;background:#000"></div>
<div class="r" style="left:171px;top:1079px;width:1749px;height:1px;background:#000"></div>
</body></html>
